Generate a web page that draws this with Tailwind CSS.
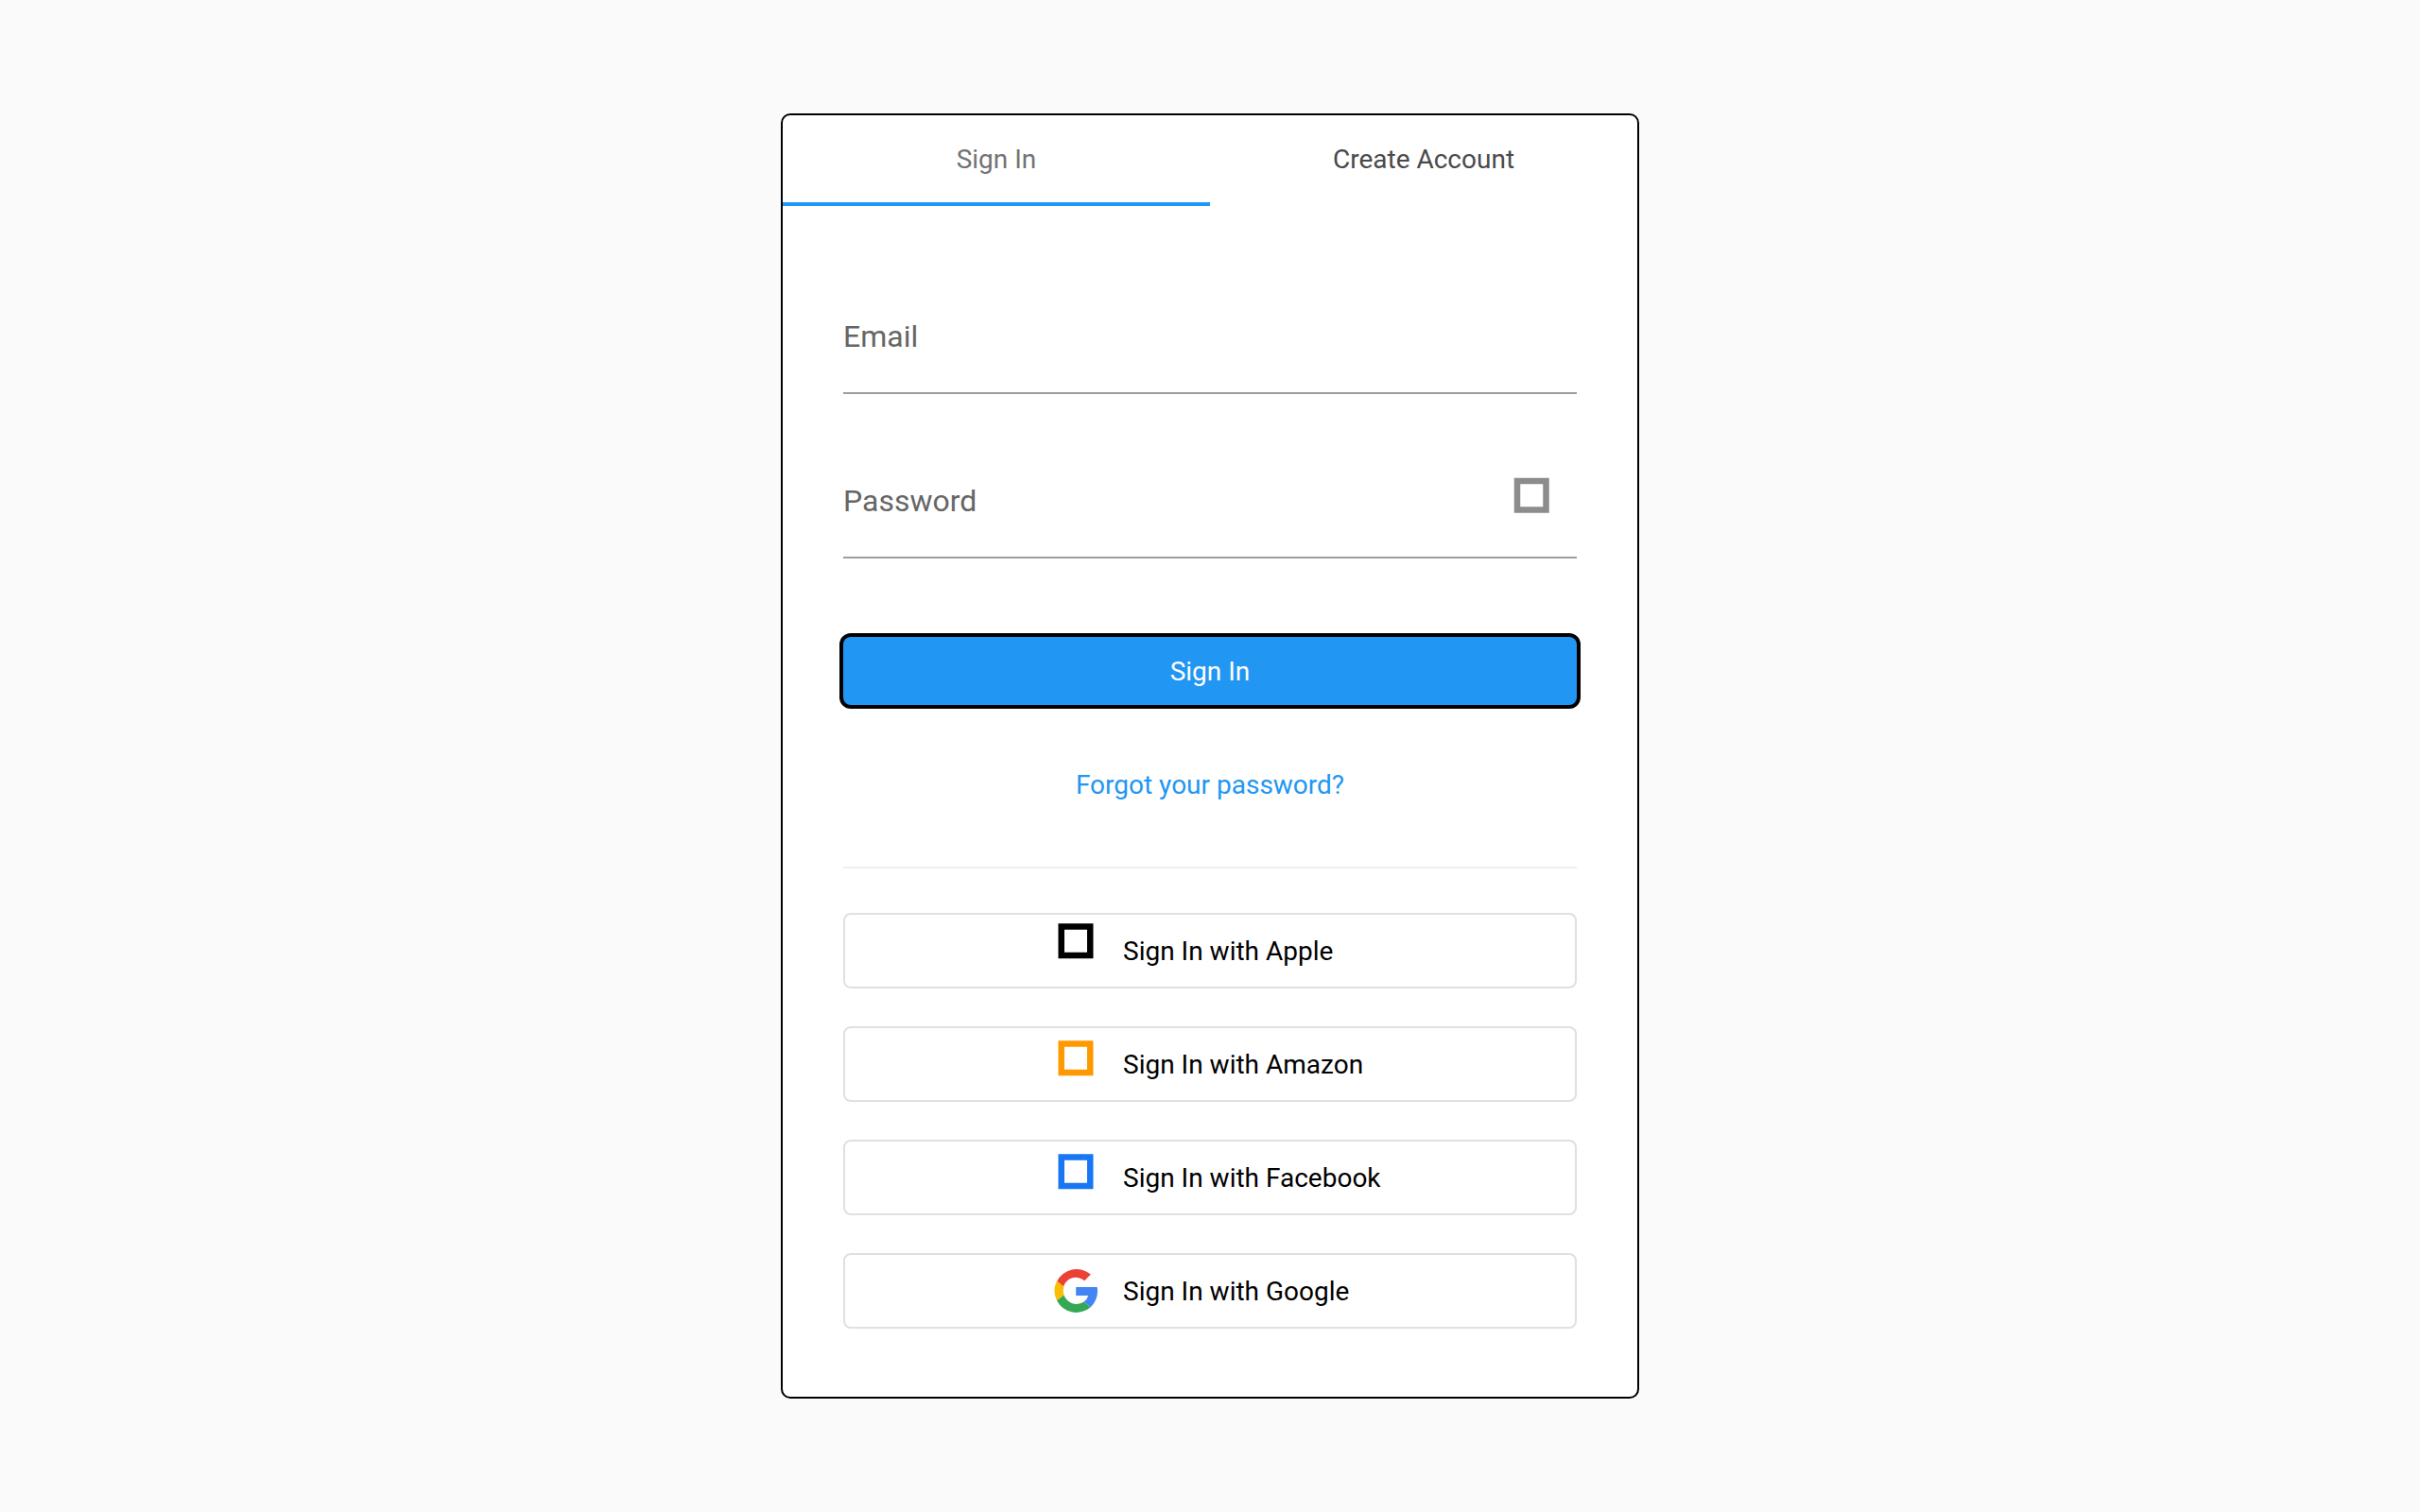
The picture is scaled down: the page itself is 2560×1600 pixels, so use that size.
<!DOCTYPE html>
<html lang="en">
<head>
<meta charset="utf-8">
<meta name="viewport" content="width=device-width, initial-scale=1">
<title>Sign In</title>
<script src="https://cdn.jsdelivr.net/npm/@tailwindcss/browser@4"></script>
</head>
<body class="flex min-h-screen items-center justify-center bg-[#fafafa] font-['Roboto',sans-serif] text-[28px] leading-[34px] text-black">
<main class="w-full max-w-[908px] rounded-[10px] border-2 border-black bg-white">
  <div role="tablist" class="grid grid-cols-2">
    <button role="tab" aria-selected="true" class="h-24 border-b-4 border-[#2196f3] pt-0.5 text-[#737373]">Sign In</button>
    <button role="tab" aria-selected="false" class="h-24 border-b-4 border-transparent pt-0.5 text-[#4a4a4a]">Create Account</button>
  </div>

  <form class="flex flex-col px-16 pt-[79px] pb-[72px]">
    <div class="grid h-[120px] border-b-2 border-[#9e9e9e] text-[32px] leading-10">
      <input id="email" type="email" placeholder=" " class="peer col-start-1 row-start-1 min-w-0 outline-none">
      <label for="email" class="pointer-events-none col-start-1 row-start-1 self-center text-[#666666] peer-not-placeholder-shown:invisible">Email</label>
    </div>

    <div class="mt-[54px] flex h-[120px] border-b-2 border-[#9e9e9e] text-[32px] leading-10">
      <div class="grid flex-1">
        <input id="password" type="password" placeholder=" " class="peer col-start-1 row-start-1 min-w-0 outline-none">
        <label for="password" class="pointer-events-none col-start-1 row-start-1 self-center text-[#666666] peer-not-placeholder-shown:invisible">Password</label>
      </div>
      <button type="button" aria-label="Show password" class="mr-6">
        <svg class="h-16 w-12" viewBox="0 0 48 64" fill="none" stroke="#8c8c8c" stroke-width="6.500"><rect x="9" y="11" width="30.500" height="30.500"/></svg>
      </button>
    </div>

    <button type="submit" class="mt-[83px] h-[72px] rounded-lg bg-[#2196f3] pt-0.5 text-white ring-4 ring-black">Sign In</button>
    <a href="#" class="mt-[68px] self-center text-[#2196f3]">Forgot your password?</a>

    <hr class="mt-[69px] border-t-2 border-[#eeeeee]">

    <div class="mt-[47px] flex flex-col gap-10">
      <button type="button" class="flex h-20 items-center justify-center rounded-lg border-2 border-[#e0e0e0]">
        <span class="flex w-[332px] items-center gap-[26px] whitespace-nowrap">
          <svg class="h-16 w-12 shrink-0" viewBox="0 0 48 64" fill="none" stroke="#000000" stroke-width="6.500"><rect x="8.750" y="6.500" width="30.500" height="30.500"/></svg>
          <span class="pt-0.5">Sign In with Apple</span>
        </span>
      </button>
      <button type="button" class="flex h-20 items-center justify-center rounded-lg border-2 border-[#e0e0e0]">
        <span class="flex w-[332px] items-center gap-[26px] whitespace-nowrap">
          <svg class="h-16 w-12 shrink-0" viewBox="0 0 48 64" fill="none" stroke="#ff9900" stroke-width="6.500"><rect x="8.750" y="10.500" width="30.500" height="30.500"/></svg>
          <span class="pt-0.5">Sign In with Amazon</span>
        </span>
      </button>
      <button type="button" class="flex h-20 items-center justify-center rounded-lg border-2 border-[#e0e0e0]">
        <span class="flex w-[332px] items-center gap-[26px] whitespace-nowrap">
          <svg class="h-16 w-12 shrink-0" viewBox="0 0 48 64" fill="none" stroke="#1877f2" stroke-width="6.500"><rect x="8.750" y="10.500" width="30.500" height="30.500"/></svg>
          <span class="pt-0.5">Sign In with Facebook</span>
        </span>
      </button>
      <button type="button" class="flex h-20 items-center justify-center rounded-lg border-2 border-[#e0e0e0]">
        <span class="flex w-[332px] items-center gap-[26px] whitespace-nowrap">
          <svg class="size-12 shrink-0" viewBox="0 0 48 48">
            <path fill="#ea4335" d="M4 14.200A23 23 0 0 1 39.900 6.600L33.300 13.200A14 14 0 0 0 10.900 19.500Z"/>
            <path fill="#fbbc05" d="M4 13.600A23 23 0 0 0 4 34.300L11.500 28.500A14.500 14.500 0 0 1 11.500 19.400Z"/>
            <path fill="#34a853" d="M4 34.300A23 23 0 0 0 39.700 41.200L32.500 35.600A14 14 0 0 1 11.500 28.500Z"/>
            <path fill="#4285f4" d="M24.200 20V29H37.200A11 11 0 0 1 32.500 35.600L39.700 41.200C44.500 36.800 47 30.200 47 24.500Q47 22 46.700 20Z"/>
          </svg>
          <span class="pt-0.5">Sign In with Google</span>
        </span>
      </button>
    </div>
  </form>
</main>
</body>
</html>
